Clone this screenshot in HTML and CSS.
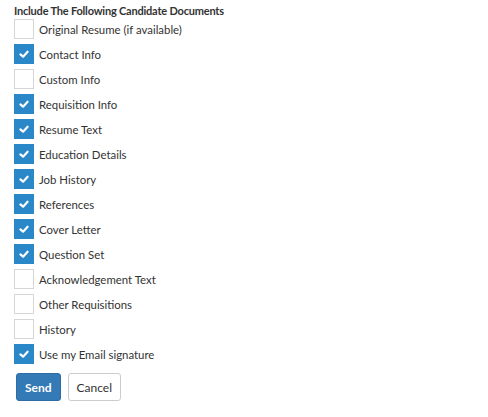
FILE: index.html
```html
<!DOCTYPE html>
<html>
<head>
<meta charset="utf-8">
<link rel="stylesheet" href="styles.css">
</head>
<body>
<div class="panel">
  <div class="title">Include The Following Candidate Documents</div>
  <div class="list">
    <label class="row"><span class="box"></span><span class="text">Original Resume (if available)</span></label>
    <label class="row"><span class="box on"><svg viewBox="0 0 20 20"><polyline points="6,10.5 9,13 14,7.5"/></svg></span><span class="text">Contact Info</span></label>
    <label class="row"><span class="box"></span><span class="text">Custom Info</span></label>
    <label class="row"><span class="box on"><svg viewBox="0 0 20 20"><polyline points="6,10.5 9,13 14,7.5"/></svg></span><span class="text">Requisition Info</span></label>
    <label class="row"><span class="box on"><svg viewBox="0 0 20 20"><polyline points="6,10.5 9,13 14,7.5"/></svg></span><span class="text">Resume Text</span></label>
    <label class="row"><span class="box on"><svg viewBox="0 0 20 20"><polyline points="6,10.5 9,13 14,7.5"/></svg></span><span class="text">Education Details</span></label>
    <label class="row"><span class="box on"><svg viewBox="0 0 20 20"><polyline points="6,10.5 9,13 14,7.5"/></svg></span><span class="text">Job History</span></label>
    <label class="row"><span class="box on"><svg viewBox="0 0 20 20"><polyline points="6,10.5 9,13 14,7.5"/></svg></span><span class="text">References</span></label>
    <label class="row"><span class="box on"><svg viewBox="0 0 20 20"><polyline points="6,10.5 9,13 14,7.5"/></svg></span><span class="text">Cover Letter</span></label>
    <label class="row"><span class="box on"><svg viewBox="0 0 20 20"><polyline points="6,10.5 9,13 14,7.5"/></svg></span><span class="text">Question Set</span></label>
    <label class="row"><span class="box"></span><span class="text">Acknowledgement Text</span></label>
    <label class="row"><span class="box"></span><span class="text">Other Requisitions</span></label>
    <label class="row"><span class="box"></span><span class="text">History</span></label>
    <label class="row"><span class="box on"><svg viewBox="0 0 20 20"><polyline points="6,10.5 9,13 14,7.5"/></svg></span><span class="text">Use my Email signature</span></label>
  </div>
  <div class="actions">
    <button class="btn primary">Send</button>
    <button class="btn">Cancel</button>
  </div>
</div>
</body>
</html>
```
FILE: styles.css
```css
html, body {
  margin: 0;
  padding: 0;
  background: #ffffff;
}
body {
  font-family: Lato, "Open Sans", sans-serif;
  color: #333333;
  font-size: 12px;
}
.panel {
  padding: 3px 0 0 14px;
}
.title {
  font-weight: bold;
  font-size: 11px;
  letter-spacing: -0.2px;
  line-height: 16px;
  color: #333333;
}
.list {
  display: flex;
  flex-direction: column;
  gap: 5px;
}
.row {
  display: flex;
  align-items: center;
  height: 20px;
}
.box {
  box-sizing: border-box;
  width: 20px;
  height: 20px;
  border: 1px solid #d6d6d6;
  background: #ffffff;
  flex: none;
  display: flex;
}
.box.on {
  background: #2a87c8;
  border-color: #2a87c8;
}
.box svg {
  width: 18px;
  height: 18px;
}
.box svg polyline {
  fill: none;
  stroke: #ffffff;
  stroke-width: 2.4;
  stroke-linecap: round;
  stroke-linejoin: round;
}
.text {
  margin-left: 5px;
  font-size: 11.4px;
  color: #333333;
}
.actions {
  display: flex;
  gap: 7px;
  margin-top: 9px;
  padding-left: 2px;
}
.btn {
  box-sizing: border-box;
  height: 28px;
  padding: 0 8px;
  border: 1px solid #cccccc;
  border-radius: 3px;
  background: #ffffff;
  color: #333333;
  font-family: Lato, "Open Sans", sans-serif;
  font-size: 12px;
}
.btn.primary {
  background: #337ab7;
  border-color: #2e6da4;
  color: #ffffff;
  font-weight: bold;
}
```
